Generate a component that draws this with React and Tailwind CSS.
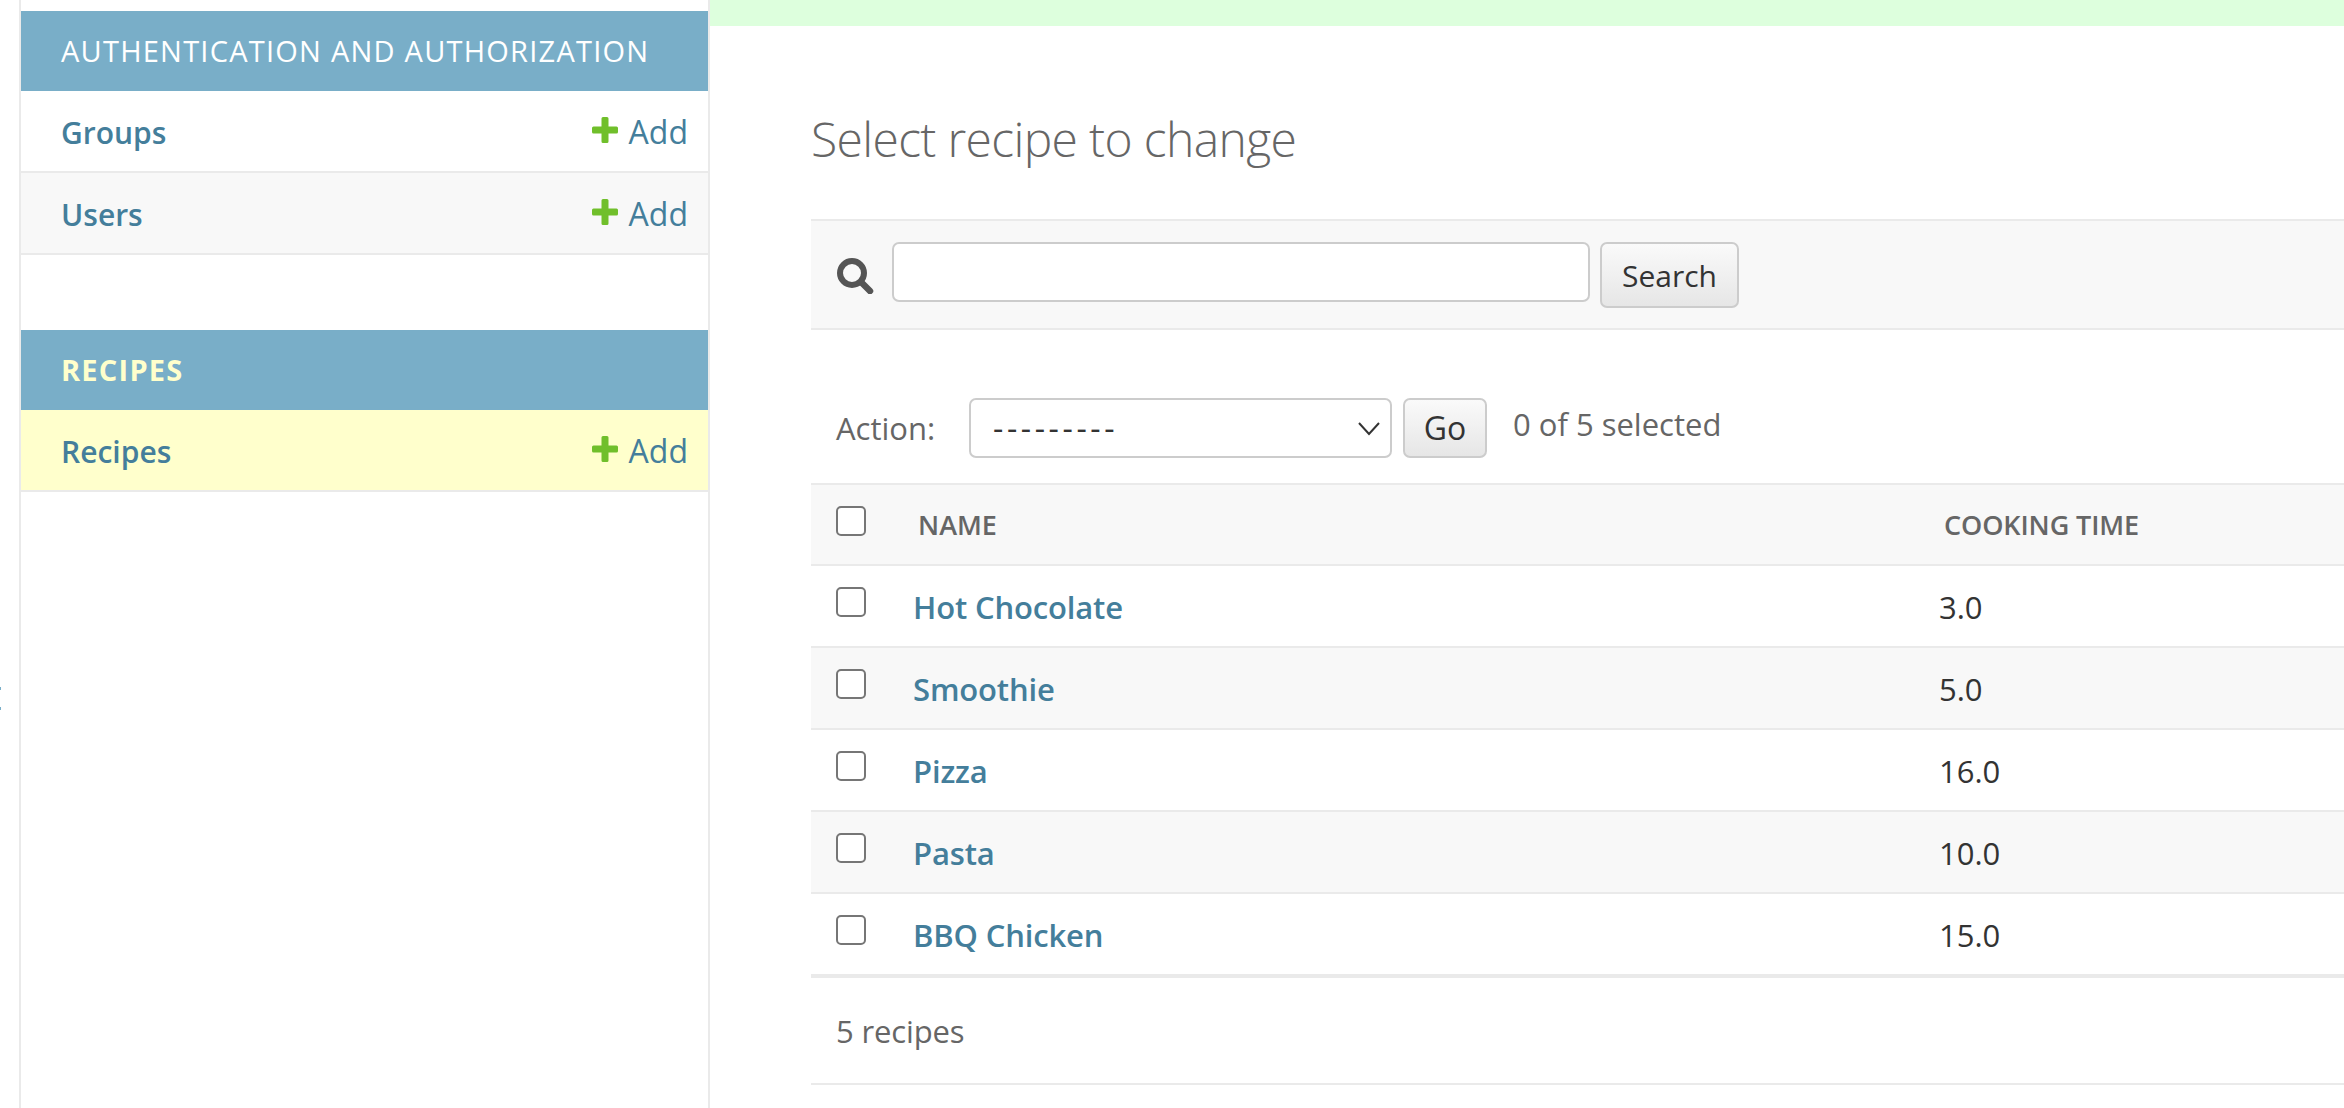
import React from 'react';

const recipes = [
    { name: 'Hot Chocolate', time: '3.0' },
    { name: 'Smoothie', time: '5.0' },
    { name: 'Pizza', time: '16.0' },
    { name: 'Pasta', time: '10.0' },
    { name: 'BBQ Chicken', time: '15.0' },
];

const AddLink = () => (
    <span className="flex items-center text-[32px] text-[#447e9b]">
        <svg width="26" height="36" viewBox="0 0 26 36" className="mr-[11px] mb-[0px]">
            <path d="M9.500 4.500a1.500 1.500 0 0 1 1.500-1.500h4a1.500 1.500 0 0 1 1.500 1.500v8H24.500a1.500 1.500 0 0 1 1.500 1.500v4a1.500 1.500 0 0 1-1.500 1.500h-8v8a1.500 1.500 0 0 1-1.500 1.500h-4a1.500 1.500 0 0 1-1.500-1.500v-8H1.500A1.500 1.500 0 0 1 0 18v-4a1.500 1.500 0 0 1 1.500-1.500h8z" fill="#70bf2b" />
        </svg>
        Add
    </span>
);

const ModelRow = ({ name, bg }) => (
    <div className={`flex items-center justify-between h-[82px] pl-[40px] pr-[20px] pt-[2px] border-b-2 border-[#eaeaea] ${bg}`}>
        <span className="text-[30px] font-semibold text-[#447e9b]">{name}</span>
        <AddLink />
    </div>
);

const Checkbox = () => (
    <input type="checkbox" className="appearance-none block w-[30px] h-[30px] bg-white border-2 border-[#767676] rounded-[5px]" />
);

const Sidebar = () => (
    <aside className="w-[691px] shrink-0 pt-[11px] border-x-2 border-[#eaeaea]">
        <div className="flex items-center h-[80px] pl-[40px] bg-[#79aec8] text-[29px] text-white tracking-[1.230px]">
            AUTHENTICATION AND AUTHORIZATION
        </div>
        <ModelRow name="Groups" bg="bg-white" />
        <ModelRow name="Users" bg="bg-[#f8f8f8]" />
        <div className="flex items-center h-[80px] mt-[75px] pl-[40px] bg-[#79aec8] text-[29px] font-bold text-[#ffffcc] tracking-[1.230px]">
            RECIPES
        </div>
        <ModelRow name="Recipes" bg="bg-[#ffffcc]" />
    </aside>
);

const Toolbar = () => (
    <div className="flex items-center h-[111px] pl-[25px] bg-[#f8f8f8] border-y-2 border-[#eaeaea]">
        <svg width="38" height="36" viewBox="0 0 38 36" className="mr-[18px] mt-[2px]">
            <circle cx="16" cy="15" r="12" fill="none" stroke="#555" strokeWidth="6" />
            <path d="M25 24l9 9" stroke="#555" strokeWidth="6.500" strokeLinecap="round" />
        </svg>
        <input type="text" className="w-[698px] h-[60px] mb-[5px] bg-white border-2 border-[#cccccc] rounded-[7px]" />
        <button className="w-[139px] h-[66px] ml-[10px] pt-[2px] text-[30px] text-[#333] rounded-[7px] border-2 border-[#cccccc] bg-linear-to-b from-[#fafafa] to-[#e6e6e6]">
            Search
        </button>
    </div>
);

const Actions = () => (
    <div className="flex items-center h-[153px] pl-[25px] pt-[42px] text-[31px] text-[#666]">
        <span className="w-[133px] shrink-0 pt-[1px]">Action:</span>
        <div className="relative w-[423px] h-[60px] shrink-0">
            <select className="appearance-none w-full h-full pl-[22px] bg-white text-[32px] text-[#333] tracking-[3.600px] border-2 border-[#cccccc] rounded-[7px]">
                <option>---------</option>
            </select>
            <svg width="22" height="14" viewBox="0 0 22 14" className="absolute right-[12px] top-[24px]">
                <path d="M1 1l10 11L21 1" fill="none" stroke="#333" strokeWidth="2" />
            </svg>
        </div>
        <button className="w-[84px] h-[60px] ml-[11px] text-[32px] text-[#333] rounded-[7px] border-2 border-[#cccccc] bg-linear-to-b from-[#fafafa] to-[#e6e6e6]">
            Go
        </button>
        <span className="ml-[26px] mb-[6px]">0 of 5 selected</span>
    </div>
);

const App = () => {
    return (
        <div className="flex w-full h-[1108px] overflow-hidden bg-white font-['Open_Sans',sans-serif]">
            <div className="w-[19px] shrink-0 flex flex-col pt-[687px] gap-[17px]">
                <span className="block w-[1px] h-[3px] bg-[#79aec8]"></span>
                <span className="block w-[1px] h-[3px] bg-[#79aec8]"></span>
            </div>
            <Sidebar />
            <main className="flex-1 min-w-0">
                <div className="h-[26px] bg-[#ddffdd]"></div>
                <div className="pl-[101px]">
                    <h1 className="flex items-center h-[193px] pt-[33px] text-[48px] tracking-[-0.650px] font-light text-[#666]">
                        Select recipe to change
                    </h1>
                    <Toolbar />
                    <Actions />
                    <div className="flex items-center h-[83px] bg-[#f8f8f8] border-y-2 border-[#eaeaea] text-[27px] font-semibold text-[#666]">
                        <div className="w-[107px] pl-[25px] shrink-0 mb-[8px]"><Checkbox /></div>
                        <span className="w-[1026px] shrink-0 pt-[1px]">NAME</span>
                        <span className="pt-[1px] tracking-[-0.100px]">COOKING TIME</span>
                    </div>
                    {recipes.map((recipe, i) => (
                        <div
                            key={recipe.name}
                            className={`flex items-center border-[#eaeaea] text-[31px] pt-[2px] ${i === recipes.length - 1 ? 'border-b-4 h-[84px]' : 'border-b-2 h-[82px]'} ${i % 2 === 1 ? 'bg-[#f8f8f8]' : 'bg-white'}`}
                        >
                            <div className="w-[102px] pl-[25px] shrink-0 mb-[10px]"><Checkbox /></div>
                            <span className="w-[1026px] shrink-0 font-semibold text-[#447e9b] tracking-[-0.150px]">{recipe.name}</span>
                            <span className="text-[#333]">{recipe.time}</span>
                        </div>
                    ))}
                    <div className="flex items-center h-[107px] pl-[25px] pt-[2px] border-b-2 border-[#eaeaea] text-[31px] tracking-[-0.150px] text-[#666]">
                        5 recipes
                    </div>
                </div>
            </main>
        </div>
    );
};

export default App;
